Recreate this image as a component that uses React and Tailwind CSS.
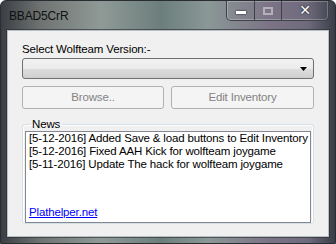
import React from 'react';

const news = [
  '[5-12-2016] Added Save & load buttons to Edit Inventory',
  '[5-12-2016] Fixed AAH Kick for wolfteam joygame',
  '[5-11-2016] Update The hack for wolfteam joygame',
];

const CaptionButtons = () => (
  <div className="flex h-[20px] mr-[6px] rounded-b-[5px] border border-t-0 border-[#3c4248] shadow-[inset_0_0_0_1px_rgba(255,255,255,0.25)] overflow-hidden">
    <div className="w-[28px] flex items-center justify-center border-r border-[#3c4248]">
      <div className="w-[10px] h-[3px] bg-white mt-[3px] shadow-[0_0_2px_#000]" />
    </div>
    <div className="w-[27px] flex items-center justify-center border-r border-[#3c4248]">
      <div className="w-[10px] h-[8px] border-2 border-[#d8d8d8] opacity-60" />
    </div>
    <div className="w-[46px] flex items-center justify-center text-white text-[14px] font-bold font-['DejaVu_Sans',sans-serif] [text-shadow:0_0_2px_#000]">
      ✕
    </div>
  </div>
);

export default function App() {
  return (
    <div className="w-[336px] h-[244px] overflow-hidden rounded-t-[6px] border border-[#2a2e33] bg-[linear-gradient(90deg,#3b3f44_0%,#6f7472_12%,#8f9a96_30%,#6c7e7c_48%,#8a9896_62%,#7c7486_80%,#6e6a7c_92%,#3a3e48_100%)] font-['Liberation_Sans',Arial,sans-serif] text-[11.5px] tracking-[-0.15px]">
      <div className="flex justify-between h-[29px]">
        <div className="pl-[8px] pt-[6px] text-[12px] text-[#111]">BBAD5CrR</div>
        <CaptionButtons />
      </div>
      <div className="mx-[6px] h-[207px] bg-[#f0f0f0] border border-[#b8c0c4] shadow-[0_0_0_1px_rgba(40,44,50,0.6)] px-[14px] pt-[11px] text-[#000]">
        <div className="h-[15px] leading-[15px]">Select Wolfteam Version:-</div>
        <div className="mt-[1px] h-[21px] rounded-[3px] border border-[#707070] bg-[linear-gradient(#f2f2f2,#ebebeb_50%,#dddddd_51%,#cfcfcf)] flex items-center justify-end pr-[6px]">
          <svg width="7" height="4" viewBox="0 0 7 4"><path d="M0 0h7L3.5 4z" fill="#000" /></svg>
        </div>
        <div className="flex gap-[7px] mt-[7px]">
          <div className="w-[142px] h-[23px] rounded-[3px] border border-[#adb2b5] bg-[#f4f4f4] text-[#838383] flex items-center justify-center">Browse..</div>
          <div className="flex-1 h-[23px] rounded-[3px] border border-[#adb2b5] bg-[#f4f4f4] text-[#838383] flex items-center justify-center">Edit Inventory</div>
        </div>
        <fieldset className="mt-[8px] h-[107px] rounded-[3px] border border-[#d5dfe5] px-[2px] pb-[2px] shadow-[inset_0_0_0_1px_#ffffff]">
          <legend className="ml-[5px] px-[2px] leading-[14px]">News</legend>
          <div className="h-[92px] border border-[#828790] bg-white flex flex-col justify-between pl-[3px] pb-[3px]">
            <div className="leading-[13px] whitespace-nowrap">
              {news.map((n) => (
                <div key={n} className="h-[13px]">{n}</div>
              ))}
            </div>
            <a className="text-[#0000ff] underline leading-[14px]">Plathelper.net</a>
          </div>
        </fieldset>
      </div>
    </div>
  );
}
